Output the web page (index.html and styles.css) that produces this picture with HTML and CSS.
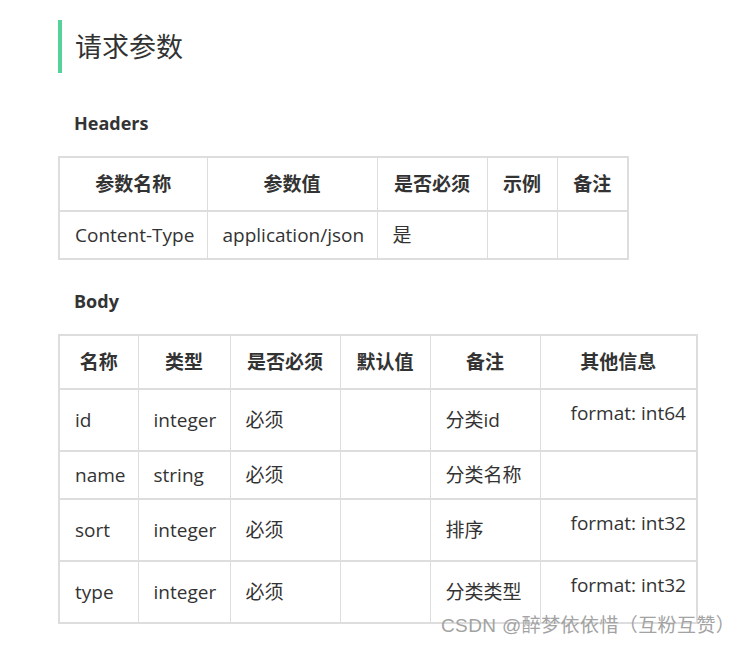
FILE: index.html
```html
<!DOCTYPE html>
<html lang="zh">
<head>
<meta charset="utf-8">
<link rel="stylesheet" href="styles.css">
</head>
<body>
<h2 class="title">请求参数</h2>
<h4 class="label label-headers">Headers</h4>
<table class="grid grid-headers">
  <colgroup><col class="h1"><col class="h2"><col class="h3"><col class="h4"><col class="h5"></colgroup>
  <thead>
    <tr><th>参数名称</th><th>参数值</th><th>是否必须</th><th>示例</th><th>备注</th></tr>
  </thead>
  <tbody>
    <tr><td>Content-Type</td><td>application/json</td><td>是</td><td></td><td></td></tr>
  </tbody>
</table>
<h4 class="label label-body">Body</h4>
<table class="grid grid-body">
  <colgroup><col class="b1"><col class="b2"><col class="b3"><col class="b4"><col class="b5"><col class="b6"></colgroup>
  <thead>
    <tr><th>名称</th><th>类型</th><th>是否必须</th><th>默认值</th><th>备注</th><th>其他信息</th></tr>
  </thead>
  <tbody>
    <tr><td>id</td><td>integer</td><td>必须</td><td></td><td>分类id</td><td><div class="info">format: int64</div></td></tr>
    <tr><td>name</td><td>string</td><td>必须</td><td></td><td>分类名称</td><td></td></tr>
    <tr><td>sort</td><td>integer</td><td>必须</td><td></td><td>排序</td><td><div class="info">format: int32</div></td></tr>
    <tr><td>type</td><td>integer</td><td>必须</td><td></td><td>分类类型</td><td><div class="info">format: int32</div></td></tr>
  </tbody>
</table>
<div class="watermark">CSDN @醉梦依依惜（互粉互赞）</div>
</body>
</html>
```
FILE: styles.css
```css
html, body {
  background: #fff;
}
body {
  margin: 0;
  padding: 20px 0 0 58px;
  font-family: "Open Sans", "Noto Sans CJK SC", sans-serif;
  color: #333;
  font-size: 19px;
  position: relative;
  min-height: 625px;
}
.title {
  margin: 0;
  height: 53px;
  line-height: 53px;
  border-left: 4px solid #55d29a;
  padding-left: 13px;
  font-size: 27px;
  font-weight: normal;
  color: #333;
}
.label {
  margin: 0;
  padding-left: 16px;
  font-size: 18px;
  line-height: 24px;
  font-weight: bold;
}
.label-headers { margin-top: 38px; }
.label-body { margin-top: 29px; }
.grid {
  border-collapse: collapse;
  table-layout: fixed;
  border: 2px solid #dddddd;
}
.grid-headers { margin-top: 21px; width: 569px; }
.grid-body { margin-top: 21px; width: 638px; }
.grid th, .grid td {
  border-top: 2px solid #dddddd;
  border-bottom: 2px solid #dddddd;
  border-left: 1px solid #dddddd;
  border-right: 1px solid #dddddd;
  line-height: 24px;
  vertical-align: middle;
}
.grid th {
  padding: 14px 6px;
  font-weight: bold;
  text-align: center;
}
.grid td {
  padding: 11px 6px 11px 15px;
  text-align: left;
}
.h1 { width: 148px; }
.h2 { width: 170px; }
.h3 { width: 110px; }
.h4 { width: 70px; }
.h5 { width: 71px; }
.b1 { width: 79px; }
.b2 { width: 92px; }
.b3 { width: 110px; }
.b4 { width: 90px; }
.b5 { width: 110px; }
.b6 { width: 157px; }
.info {
  padding-left: 15px;
  padding-bottom: 14px;
}
.watermark {
  position: absolute;
  left: 441px;
  top: 614px;
  font-size: 19px;
  line-height: 24px;
  letter-spacing: 0.4px;
  color: #a3a3a3;
  font-family: "Liberation Sans", "Noto Sans CJK SC", sans-serif;
  white-space: nowrap;
}
```
